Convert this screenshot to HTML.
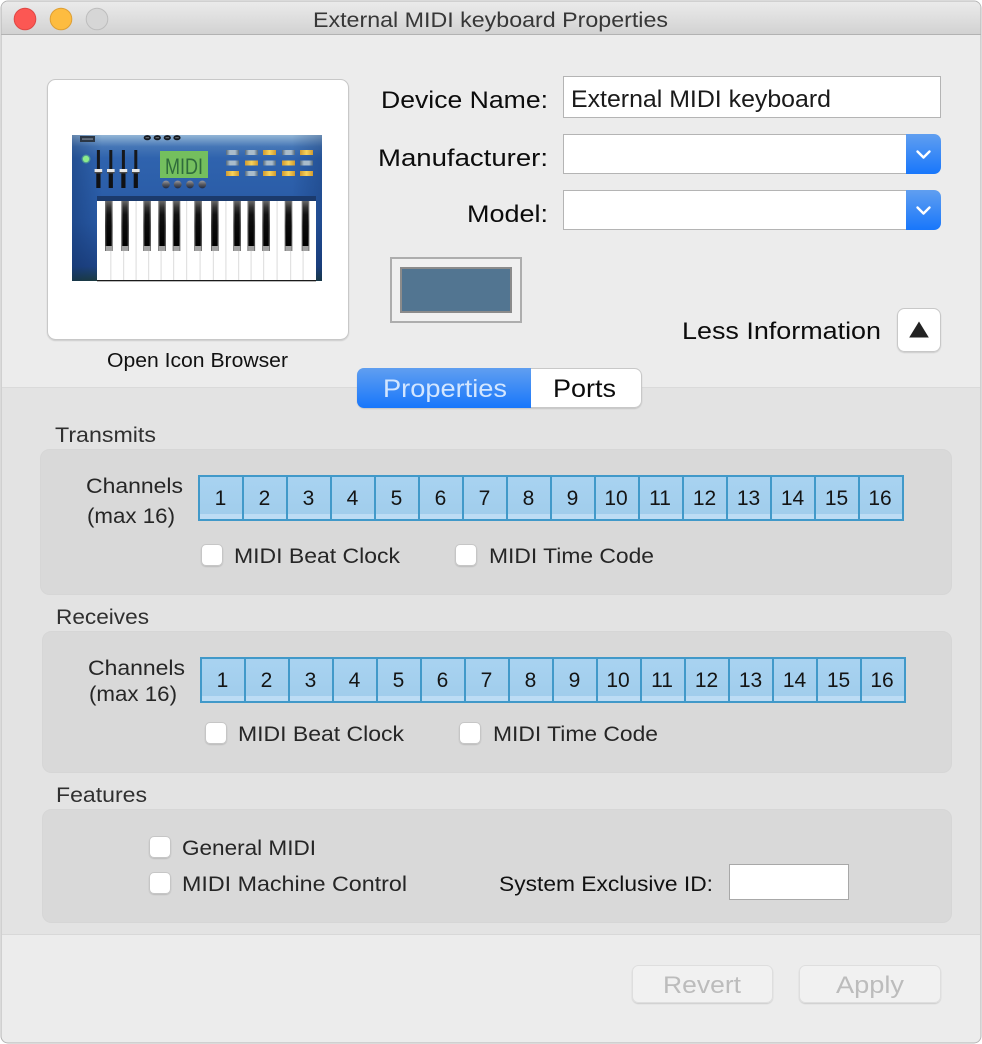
<!DOCTYPE html>
<html><head><meta charset="utf-8"><title>External MIDI keyboard Properties</title>
<style>
html,body{margin:0;padding:0;background:#fff;width:982px;height:1044px;overflow:hidden}
svg{display:block;position:absolute;left:0;top:0}
text{font-family:"Liberation Sans",sans-serif;fill:#1c1c1c;white-space:pre}
.l{font-size:24px;fill:#0c0c0c}
.s{font-size:21.500px;fill:#262626}
.h{font-size:21px;fill:#303030}
.d{font-size:21px;fill:#141414;text-anchor:middle}
</style></head><body>
<svg width="982" height="1044" viewBox="0 0 982 1044" xmlns="http://www.w3.org/2000/svg">
<defs>
<linearGradient id="tb" x1="0" y1="0" x2="0" y2="1"><stop offset="0" stop-color="#ebebeb"/><stop offset="1" stop-color="#d2d2d2"/></linearGradient>
<linearGradient id="bl" x1="0" y1="0" x2="0" y2="1"><stop offset="0" stop-color="#609ff0"/><stop offset="1" stop-color="#1877fb"/></linearGradient>
<linearGradient id="kb" x1="0" y1="0" x2="0" y2="1"><stop offset="0" stop-color="#93b6d6"/><stop offset=".08" stop-color="#4576b6"/><stop offset=".16" stop-color="#2f63ae"/><stop offset=".6" stop-color="#2859a4"/><stop offset=".9" stop-color="#1e4486"/><stop offset="1" stop-color="#1d3d3e"/></linearGradient>
<linearGradient id="kbh" x1="0" y1="0" x2="1" y2="0"><stop offset="0" stop-color="#0d2a5e" stop-opacity=".35"/><stop offset=".12" stop-color="#0d2a5e" stop-opacity="0"/><stop offset=".88" stop-color="#0d2a5e" stop-opacity="0"/><stop offset="1" stop-color="#0d2a5e" stop-opacity=".3"/></linearGradient>
<linearGradient id="cg" x1="0" y1="0" x2="0" y2="1"><stop offset="0" stop-color="#a9d3f1"/><stop offset="1" stop-color="#9fcceb"/></linearGradient>
<linearGradient id="bk" x1="0" y1="0" x2="0" y2="1"><stop offset="0" stop-color="#666"/><stop offset=".14" stop-color="#333"/><stop offset=".3" stop-color="#111"/><stop offset="1" stop-color="#000"/></linearGradient>
<linearGradient id="bks" x1="0" y1="0" x2="0" y2="1"><stop offset="0" stop-color="#777"/><stop offset=".5" stop-color="#3c3c3c"/><stop offset="1" stop-color="#4a4a4a"/></linearGradient>
<linearGradient id="kn" x1="0" y1="0" x2="0" y2="1"><stop offset="0" stop-color="#9a9ca4"/><stop offset=".5" stop-color="#55575f"/><stop offset="1" stop-color="#1e2a44"/></linearGradient>
<linearGradient id="gb" x1="0" y1="0" x2="1" y2="0"><stop offset="0" stop-color="#55697c"/><stop offset=".3" stop-color="#a9bccb"/><stop offset=".7" stop-color="#a9bccb"/><stop offset="1" stop-color="#55697c"/></linearGradient>
<linearGradient id="yb" x1="0" y1="0" x2="1" y2="0"><stop offset="0" stop-color="#d09a30"/><stop offset=".5" stop-color="#f8d45c"/><stop offset="1" stop-color="#d09a30"/></linearGradient>
<filter id="sh" x="-10%" y="-10%" width="120%" height="130%"><feDropShadow dx="0" dy="1" stdDeviation=".6" flood-color="#000" flood-opacity=".14"/></filter>
<g id="cell"><rect x="0" y="0" width="44" height="46" fill="url(#cg)"/><rect x="0" y="39" width="44" height="6" fill="#bcdcf4"/><rect x="1" y="1" width="44" height="44" fill="none" stroke="#4199c9" stroke-width="2"/></g>
<g id="row">
<use href="#cell" x="0"/><use href="#cell" x="44"/><use href="#cell" x="88"/><use href="#cell" x="132"/><use href="#cell" x="176"/><use href="#cell" x="220"/><use href="#cell" x="264"/><use href="#cell" x="308"/><use href="#cell" x="352"/><use href="#cell" x="396"/><use href="#cell" x="440"/><use href="#cell" x="484"/><use href="#cell" x="528"/><use href="#cell" x="572"/><use href="#cell" x="616"/><use href="#cell" x="660"/>
</g>
<g id="cb"><rect x=".5" y=".5" width="21" height="21" rx="4.500" fill="#fff" stroke="#c6c6c6" filter="url(#sh)"/></g>
<g id="bkey"><rect x="0" y="0" width="7.600" height="50" fill="url(#bks)"/><rect x="1.300" y="0" width="5" height="45" fill="url(#bk)"/><rect x=".6" y="45" width="6.400" height="5" fill="#a2a2a2"/></g>
<g id="sl"><rect x="-1.400" y="0" width="3" height="20" fill="#16181c"/><rect x="-2" y="20" width="4.200" height="18" fill="#101114"/><rect x="-3.700" y="19" width="7.600" height="3" fill="#e6e6e6"/><rect x="-3.700" y="22" width="7.600" height="1.400" fill="#4a4a4a"/></g>
<g id="kno"><circle cx="0" cy="0" r="3.900" fill="url(#kn)"/></g>
</defs>

<!-- window -->
<rect x="1" y="1" width="980" height="1042" rx="7" fill="#ececec" stroke="#b4b4b4"/>
<path d="M1.500 34V8a6.500 6.500 0 0 1 6.500-6.500H974a6.500 6.500 0 0 1 6.500 6.500V34Z" fill="url(#tb)"/>
<rect x="1" y="34" width="980" height="1" fill="#b2b2b2"/>
<circle cx="25" cy="19" r="10.800" fill="#fc5753" stroke="#df4744"/>
<circle cx="61" cy="19" r="10.800" fill="#fdbc40" stroke="#de9f34"/>
<circle cx="97" cy="19" r="10.800" fill="#d6d6d6" stroke="#bdbdbd"/>
<text x="313" y="27" textLength="355" lengthAdjust="spacingAndGlyphs" style="font-size:21px;fill:#373737">External MIDI keyboard Properties</text>

<!-- grey band -->
<rect x="2" y="388" width="978" height="546" fill="#e3e3e3"/>
<rect x="2" y="387" width="978" height="1" fill="#dadada"/>
<rect x="2" y="934" width="978" height="1" fill="#d8d8d8"/>

<!-- icon card -->
<rect x="47.500" y="79.500" width="301" height="260" rx="8" fill="#fff" stroke="#c8c8c8" filter="url(#sh)"/>
<!-- keyboard -->
<rect x="72" y="135" width="250" height="146" fill="url(#kb)"/>
<rect x="72" y="135" width="250" height="146" fill="url(#kbh)"/>
<rect x="80" y="136" width="15" height="6" fill="#2b3644"/>
<rect x="82" y="138.300" width="11" height="1.500" fill="#6f7b8b"/>
<g fill="#14181f"><ellipse cx="147.300" cy="137.700" rx="3.600" ry="2.600"/><ellipse cx="157.300" cy="137.700" rx="3.600" ry="2.600"/><ellipse cx="167.300" cy="137.700" rx="3.600" ry="2.600"/><ellipse cx="177" cy="137.700" rx="3.600" ry="2.600"/></g>
<g fill="#8a96a0"><rect x="145.500" y="137.400" width="3.600" height=".8"/><rect x="155.500" y="137.400" width="3.600" height=".8"/><rect x="165.500" y="137.400" width="3.600" height=".8"/><rect x="175.200" y="137.400" width="3.600" height=".8"/></g>
<circle cx="86" cy="159" r="4.500" fill="#6fcf8a" opacity=".5"/>
<circle cx="86" cy="159" r="3.200" fill="#8cec8c"/>
<use href="#sl" x="98.300" y="150"/><use href="#sl" x="110.700" y="150"/><use href="#sl" x="123.300" y="150"/><use href="#sl" x="135.700" y="150"/>
<rect x="160" y="151" width="48" height="27" fill="#74bf5e"/>
<text x="165" y="174" textLength="38" lengthAdjust="spacingAndGlyphs" style="font-size:22px;fill:#2f6b3c">MIDI</text>
<use href="#kno" x="166" y="184.500"/><use href="#kno" x="177.700" y="184.500"/><use href="#kno" x="190" y="184.500"/><use href="#kno" x="202.300" y="184.500"/>
<g fill="url(#gb)"><rect x="226" y="150" width="13" height="5"/><rect x="245" y="150" width="13" height="5"/><rect x="282" y="150" width="13" height="5"/>
<rect x="226" y="160.500" width="13" height="5"/><rect x="263" y="160.500" width="13" height="5"/><rect x="300" y="160.500" width="13" height="5"/><rect x="245" y="171" width="13" height="5"/></g>
<g fill="url(#yb)"><rect x="263" y="150" width="13" height="5"/><rect x="300" y="150" width="13" height="5"/><rect x="245" y="160.500" width="13" height="5"/><rect x="282" y="160.500" width="13" height="5"/>
<rect x="226" y="171" width="13" height="5"/><rect x="263" y="171" width="13" height="5"/><rect x="282" y="171" width="13" height="5"/><rect x="300" y="171" width="13" height="5"/></g>
<rect x="97" y="196" width="219" height="5" fill="#1b3a6c"/>
<rect x="97" y="201" width="219" height="79" fill="#fff"/>
<rect x="97" y="280" width="219" height="1.300" fill="#1a1a1a"/>
<g fill="#e2e2e2"><rect x="110.200" y="201" width="1.200" height="79"/><rect x="123" y="201" width="1.200" height="79"/><rect x="135.500" y="201" width="1.200" height="79"/><rect x="148" y="201" width="1.200" height="79"/><rect x="160.500" y="201" width="1.200" height="79"/><rect x="173" y="201" width="1.200" height="79"/><rect x="186" y="201" width="1.200" height="79"/><rect x="199.500" y="201" width="1.200" height="79"/><rect x="212.800" y="201" width="1.200" height="79"/><rect x="225.300" y="201" width="1.200" height="79"/><rect x="238" y="201" width="1.200" height="79"/><rect x="250.500" y="201" width="1.200" height="79"/><rect x="263" y="201" width="1.200" height="79"/><rect x="276.500" y="201" width="1.200" height="79"/><rect x="290" y="201" width="1.200" height="79"/><rect x="302.500" y="201" width="1.200" height="79"/></g>
<use href="#bkey" x="105" y="201"/><use href="#bkey" x="121.300" y="201"/><use href="#bkey" x="143.300" y="201"/><use href="#bkey" x="158.300" y="201"/><use href="#bkey" x="172.700" y="201"/><use href="#bkey" x="194.300" y="201"/><use href="#bkey" x="211" y="201"/><use href="#bkey" x="233.300" y="201"/><use href="#bkey" x="247.500" y="201"/><use href="#bkey" x="262.300" y="201"/><use href="#bkey" x="284.700" y="201"/><use href="#bkey" x="301.700" y="201"/>

<text x="107" y="367" textLength="181" lengthAdjust="spacingAndGlyphs" style="font-size:20px;fill:#111">Open Icon Browser</text>

<!-- form -->
<text class="l" x="381" y="108" textLength="167" lengthAdjust="spacingAndGlyphs">Device Name:</text>
<text class="l" x="378" y="166" textLength="170" lengthAdjust="spacingAndGlyphs">Manufacturer:</text>
<text class="l" x="467" y="222" textLength="81" lengthAdjust="spacingAndGlyphs">Model:</text>
<rect x="563.500" y="76.500" width="377" height="41" fill="#fff" stroke="#b4b4b4"/>
<text x="571" y="107" textLength="260" lengthAdjust="spacingAndGlyphs" style="font-size:24px;fill:#1a1a1a">External MIDI keyboard</text>

<rect x="563.500" y="134.500" width="350" height="39" fill="#fff" stroke="#b4b4b4"/>
<path d="M906 134H934a7 7 0 0 1 7 7V167a7 7 0 0 1-7 7H906Z" fill="url(#bl)"/>
<path d="M917.500 151.500L923.500 157.500L929.500 151.500" fill="none" stroke="#fff" stroke-width="2.400" stroke-linecap="round" stroke-linejoin="round"/>
<rect x="563.500" y="190.500" width="350" height="39" fill="#fff" stroke="#b4b4b4"/>
<path d="M906 190H934a7 7 0 0 1 7 7V223a7 7 0 0 1-7 7H906Z" fill="url(#bl)"/>
<path d="M917.500 207.500L923.500 213.500L929.500 207.500" fill="none" stroke="#fff" stroke-width="2.400" stroke-linecap="round" stroke-linejoin="round"/>

<!-- swatch -->
<rect x="391" y="258" width="130" height="64" fill="#f0f0f0" stroke="#adadad" stroke-width="2"/>
<rect x="401" y="268" width="110" height="44" fill="#527591" stroke="#8b8b8b" stroke-width="2"/>

<text class="l" x="682" y="339" textLength="199" lengthAdjust="spacingAndGlyphs">Less Information</text>
<rect x="897.500" y="308.500" width="43" height="43" rx="7" fill="#fff" stroke="#c8c8c8" filter="url(#sh)"/>
<path d="M919 321.500L928.800 337.500H909.200Z" fill="#222"/>

<!-- segmented -->
<rect x="357.500" y="368.500" width="284" height="39" rx="7" fill="#fff" stroke="#c8c8c8" filter="url(#sh)"/>
<path d="M531 368H364a7 7 0 0 0-7 7V401a7 7 0 0 0 7 7H531Z" fill="url(#bl)"/>
<text x="383" y="397" textLength="124" lengthAdjust="spacingAndGlyphs" style="font-size:25px;fill:#d3e6ff">Properties</text>
<text x="553" y="397" textLength="63" lengthAdjust="spacingAndGlyphs" style="font-size:25px;fill:#0c0c0c">Ports</text>

<!-- transmits -->
<text class="h" x="55" y="442" textLength="101" lengthAdjust="spacingAndGlyphs">Transmits</text>
<rect x="40.500" y="449.500" width="911" height="145" rx="9" fill="#d9d9d9" stroke="#d6d6d6"/>
<text class="s" x="86" y="493" textLength="97" lengthAdjust="spacingAndGlyphs">Channels</text>
<text class="s" x="87" y="523" textLength="88" lengthAdjust="spacingAndGlyphs">(max 16)</text>
<use href="#row" x="198" y="475"/>
<text class="d" x="220.500" y="505">1</text><text class="d" x="264.500" y="505">2</text><text class="d" x="308.500" y="505">3</text><text class="d" x="352.500" y="505">4</text><text class="d" x="396.500" y="505">5</text><text class="d" x="440.500" y="505">6</text><text class="d" x="484.500" y="505">7</text><text class="d" x="528.500" y="505">8</text><text class="d" x="572.500" y="505">9</text><text class="d" x="616" y="505">10</text><text class="d" x="660" y="505">11</text><text class="d" x="704.500" y="505">12</text><text class="d" x="748.500" y="505">13</text><text class="d" x="792.500" y="505">14</text><text class="d" x="836.500" y="505">15</text><text class="d" x="880" y="505">16</text>
<use href="#cb" x="201" y="544"/>
<text class="s" x="234" y="563" textLength="166" lengthAdjust="spacingAndGlyphs">MIDI Beat Clock</text>
<use href="#cb" x="455" y="544"/>
<text class="s" x="489" y="563" textLength="165" lengthAdjust="spacingAndGlyphs">MIDI Time Code</text>

<!-- receives -->
<text class="h" x="56" y="624" textLength="93" lengthAdjust="spacingAndGlyphs">Receives</text>
<rect x="42.500" y="631.500" width="909" height="141" rx="9" fill="#d9d9d9" stroke="#d6d6d6"/>
<text class="s" x="88" y="675" textLength="97" lengthAdjust="spacingAndGlyphs">Channels</text>
<text class="s" x="89" y="701" textLength="88" lengthAdjust="spacingAndGlyphs">(max 16)</text>
<use href="#row" x="200" y="657"/>
<text class="d" x="222.500" y="687">1</text><text class="d" x="266.500" y="687">2</text><text class="d" x="310.500" y="687">3</text><text class="d" x="354.500" y="687">4</text><text class="d" x="398.500" y="687">5</text><text class="d" x="442.500" y="687">6</text><text class="d" x="486.500" y="687">7</text><text class="d" x="530.500" y="687">8</text><text class="d" x="574.500" y="687">9</text><text class="d" x="618" y="687">10</text><text class="d" x="662" y="687">11</text><text class="d" x="706.500" y="687">12</text><text class="d" x="750.500" y="687">13</text><text class="d" x="794.500" y="687">14</text><text class="d" x="838.500" y="687">15</text><text class="d" x="882" y="687">16</text>
<use href="#cb" x="205" y="722"/>
<text class="s" x="238" y="741" textLength="166" lengthAdjust="spacingAndGlyphs">MIDI Beat Clock</text>
<use href="#cb" x="459" y="722"/>
<text class="s" x="493" y="741" textLength="165" lengthAdjust="spacingAndGlyphs">MIDI Time Code</text>

<!-- features -->
<text class="h" x="56" y="802" textLength="91" lengthAdjust="spacingAndGlyphs">Features</text>
<rect x="42.500" y="809.500" width="909" height="113" rx="9" fill="#d9d9d9" stroke="#d6d6d6"/>
<use href="#cb" x="149" y="836"/>
<text class="s" x="182" y="855" textLength="134" lengthAdjust="spacingAndGlyphs">General MIDI</text>
<use href="#cb" x="149" y="872"/>
<text class="s" x="182" y="891" textLength="225" lengthAdjust="spacingAndGlyphs">MIDI Machine Control</text>
<text class="s" x="499" y="891" textLength="214" lengthAdjust="spacingAndGlyphs" style="fill:#111">System Exclusive ID:</text>
<rect x="729.500" y="864.500" width="119" height="35" fill="#fff" stroke="#a8a8a8"/>

<!-- bottom buttons -->
<rect x="632.500" y="965.500" width="140" height="37" rx="6" fill="#f1f1f1" stroke="#dedede" filter="url(#sh)"/>
<rect x="799.500" y="965.500" width="141" height="37" rx="6" fill="#f1f1f1" stroke="#dedede" filter="url(#sh)"/>
<text x="663" y="993" textLength="78" lengthAdjust="spacingAndGlyphs" style="font-size:24px;fill:#bcbcbc">Revert</text>
<text x="836" y="993" textLength="68" lengthAdjust="spacingAndGlyphs" style="font-size:24px;fill:#bcbcbc">Apply</text>
</svg>
</body></html>
